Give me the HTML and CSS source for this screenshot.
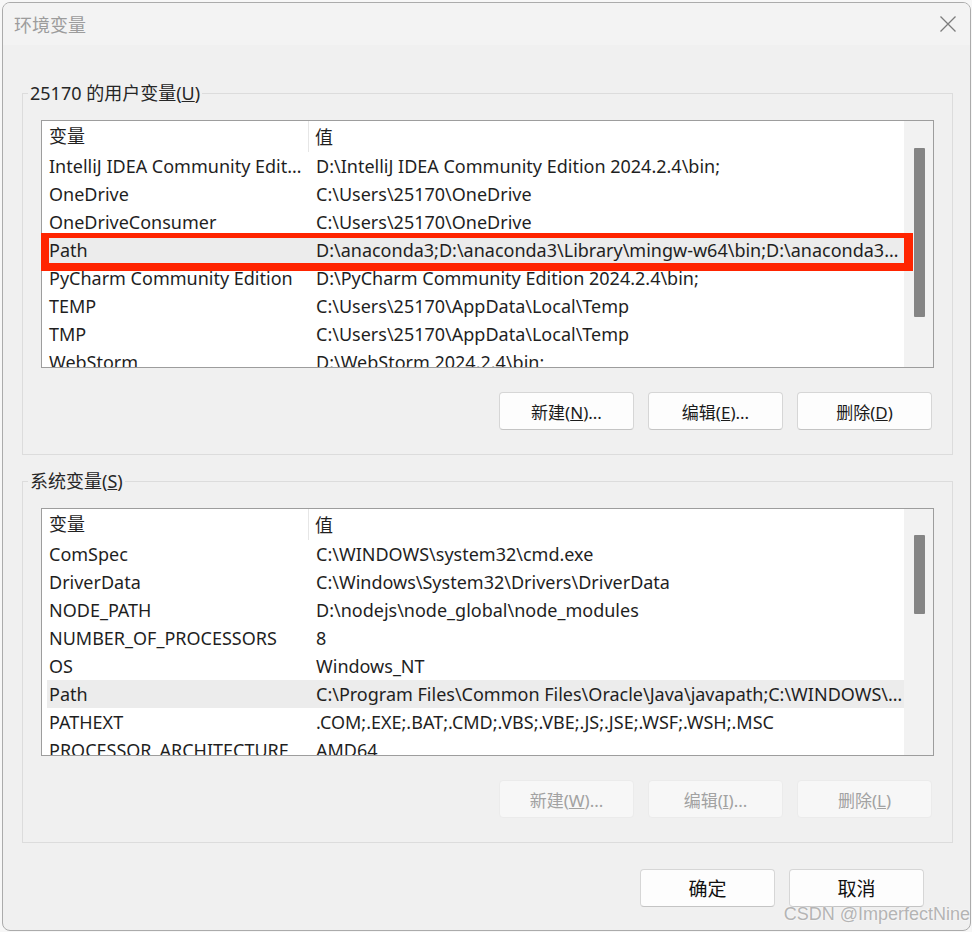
FILE: index.html
```html
<!DOCTYPE html>
<html lang="zh-CN">
  <head>
    <meta charset="UTF-8" />
    <meta name="viewport" content="width=device-width, initial-scale=1.0" />
    <title>环境变量</title>
    <link rel="stylesheet" href="styles.css">
  </head>
  <body>
    <div class="dialog">
      <div class="titlebar">
        <span class="title">环境变量</span>
        <button class="close" aria-label="关闭">
          <svg width="16" height="16" viewBox="0 0 16 16">
            <path d="M0.5 0.5 L15.5 15.5 M15.5 0.5 L0.5 15.5" stroke="#7c7c7c" stroke-width="1.3" fill="none" />
          </svg>
        </button>
      </div>

      <div class="content">
        <fieldset class="group">
          <legend>25170 的用户变量(<u>U</u>)</legend>
          <div class="list-wrap">
            <div class="listview">
              <div class="list-body">
                <div class="list-head">
                  <span class="cell name">变量</span>
                  <span class="cell value">值</span>
                </div>
                <div class="list-row">
                  <span class="cell name">IntelliJ IDEA Community Edition</span>
                  <span class="cell value">D:\IntelliJ IDEA Community Edition 2024.2.4\bin;</span>
                </div>
                <div class="list-row">
                  <span class="cell name">OneDrive</span>
                  <span class="cell value">C:\Users\25170\OneDrive</span>
                </div>
                <div class="list-row">
                  <span class="cell name">OneDriveConsumer</span>
                  <span class="cell value">C:\Users\25170\OneDrive</span>
                </div>
                <div class="list-row selected">
                  <span class="cell name">Path</span>
                  <span class="cell value">D:\anaconda3;D:\anaconda3\Library\mingw-w64\bin;D:\anaconda3\Library\usr\bin;D:\anaconda3\Library\bin;D:\anaconda3\Scripts;</span>
                </div>
                <div class="list-row">
                  <span class="cell name">PyCharm Community Edition</span>
                  <span class="cell value">D:\PyCharm Community Edition 2024.2.4\bin;</span>
                </div>
                <div class="list-row">
                  <span class="cell name">TEMP</span>
                  <span class="cell value">C:\Users\25170\AppData\Local\Temp</span>
                </div>
                <div class="list-row">
                  <span class="cell name">TMP</span>
                  <span class="cell value">C:\Users\25170\AppData\Local\Temp</span>
                </div>
                <div class="list-row">
                  <span class="cell name">WebStorm</span>
                  <span class="cell value">D:\WebStorm 2024.2.4\bin;</span>
                </div>
              </div>
              <div class="scrollbar">
                <div class="thumb thumb-user"></div>
              </div>
            </div>
            <div class="marker"></div>
          </div>
          <div class="actions">
            <button class="btn">新建(<u>N</u>)...</button>
            <button class="btn">编辑(<u>E</u>)...</button>
            <button class="btn">删除(<u>D</u>)</button>
          </div>
        </fieldset>

        <fieldset class="group">
          <legend>系统变量(<u>S</u>)</legend>
          <div class="list-wrap">
            <div class="listview">
              <div class="list-body">
                <div class="list-head">
                  <span class="cell name">变量</span>
                  <span class="cell value">值</span>
                </div>
                <div class="list-row">
                  <span class="cell name">ComSpec</span>
                  <span class="cell value">C:\WINDOWS\system32\cmd.exe</span>
                </div>
                <div class="list-row">
                  <span class="cell name">DriverData</span>
                  <span class="cell value">C:\Windows\System32\Drivers\DriverData</span>
                </div>
                <div class="list-row">
                  <span class="cell name">NODE_PATH</span>
                  <span class="cell value">D:\nodejs\node_global\node_modules</span>
                </div>
                <div class="list-row">
                  <span class="cell name">NUMBER_OF_PROCESSORS</span>
                  <span class="cell value">8</span>
                </div>
                <div class="list-row">
                  <span class="cell name">OS</span>
                  <span class="cell value">Windows_NT</span>
                </div>
                <div class="list-row selected">
                  <span class="cell name">Path</span>
                  <span class="cell value">C:\Program Files\Common Files\Oracle\Java\javapath;C:\WINDOWS\system32;C:\WINDOWS;C:\WINDOWS\System32\Wbem;</span>
                </div>
                <div class="list-row">
                  <span class="cell name">PATHEXT</span>
                  <span class="cell value">.COM;.EXE;.BAT;.CMD;.VBS;.VBE;.JS;.JSE;.WSF;.WSH;.MSC</span>
                </div>
                <div class="list-row">
                  <span class="cell name">PROCESSOR_ARCHITECTURE</span>
                  <span class="cell value">AMD64</span>
                </div>
              </div>
              <div class="scrollbar">
                <div class="thumb thumb-system"></div>
              </div>
            </div>
          </div>
          <div class="actions">
            <button class="btn" disabled>新建(<u>W</u>)...</button>
            <button class="btn" disabled>编辑(<u>I</u>)...</button>
            <button class="btn" disabled>删除(<u>L</u>)</button>
          </div>
        </fieldset>

        <div class="footer">
          <button class="btn">确定</button>
          <button class="btn">取消</button>
        </div>
      </div>

      <div class="watermark">CSDN @ImperfectNine</div>
    </div>
  </body>
</html>
```

FILE: styles.css
```css
body {
  margin: 0;
  background-color: #f7f7f7;
  font-family: 'Noto Sans', 'Noto Sans CJK SC', sans-serif;
  color: #1f1f1f;
}

.dialog {
  position: relative;
  box-sizing: border-box;
  width: 969px;
  height: 929px;
  margin: 2px 0 0 2px;
  background-color: #f0f0f0;
  border: 1px solid #ababab;
  border-radius: 8px;
  overflow: hidden;
}

.titlebar {
  display: flex;
  align-items: center;
  height: 42px;
  padding-left: 11px;
  background-color: #f3f3f3;
}

.title {
  font-size: 18px;
  color: #9c9c9c;
}

.close {
  margin-left: auto;
  margin-right: 14px;
  padding: 0;
  width: 16px;
  height: 16px;
  border: none;
  background: none;
  display: flex;
}

.content {
  padding: 36px 17px 0 19px;
}

.group {
  margin: 0;
  padding: 0 18px 24px 18px;
  border: 1px solid #dcdcdc;
}

.group + .group {
  margin-top: 14px;
}

.group legend {
  margin-left: -13px;
  padding: 0 2px;
  font-size: 18px;
  line-height: 24px;
  color: #262626;
}

.list-wrap {
  position: relative;
  margin-top: 15px;
}

.listview {
  display: flex;
  box-sizing: border-box;
  height: 248px;
  background-color: #fff;
  border: 1px solid #9d9d9d;
  overflow: hidden;
}

.list-body {
  flex: 1;
  min-width: 0;
  font-size: 18px;
}

.list-head,
.list-row {
  display: grid;
  align-items: center;
}

.list-head {
  grid-template-columns: 267px 1fr;
  height: 31px;
}

.list-head .name {
  padding-left: 7px;
  border-right: 1px solid #e6e6e6;
  height: 31px;
  line-height: 31px;
}

.list-head .value {
  padding-left: 6px;
}

.list-row {
  grid-template-columns: 262px 1fr;
  height: 28px;
  margin-left: 5px;
}

.list-row.selected {
  background-color: #ececec;
}

.cell {
  white-space: nowrap;
  overflow: hidden;
  text-overflow: ellipsis;
  line-height: 28px;
}

.list-row .name {
  padding-left: 2px;
  padding-right: 4px;
}

.list-row .value {
  padding-left: 7px;
}

.scrollbar {
  position: relative;
  width: 29px;
  background-color: #f2f2f2;
}

.thumb {
  position: absolute;
  left: 10px;
  width: 11px;
  background-color: #858585;
  border-radius: 1px;
}

.thumb-user {
  top: 27px;
  height: 169px;
}

.thumb-system {
  top: 26px;
  height: 79px;
}

/* red annotation drawn over the Path row */
.marker {
  position: absolute;
  left: 0;
  top: 113px;
  width: 872px;
  height: 38px;
  box-sizing: border-box;
  border-style: solid;
  border-color: #ff2400;
  border-width: 5px 9px 8px 8px;
}

.actions {
  display: flex;
  justify-content: flex-end;
  gap: 14px;
  margin-top: 24px;
  margin-right: 2px;
}

.btn {
  box-sizing: border-box;
  width: 135px;
  height: 38px;
  padding: 0;
  font-family: 'Noto Sans', 'Noto Sans CJK SC', sans-serif;
  font-size: 17px;
  color: #1b1b1b;
  background-color: #fdfdfd;
  border: 1px solid #d6d6d6;
  border-bottom-color: #c4c4c4;
  border-radius: 4px;
}

.btn:disabled {
  color: #a2a2a2;
  background-color: #f7f7f7;
  border-color: #ebebeb;
}

.footer {
  display: flex;
  justify-content: flex-end;
  gap: 14px;
  margin-top: 26px;
  padding-right: 29px;
}

.footer .btn {
  font-size: 19px;
  color: #111;
}

.watermark {
  position: absolute;
  right: 0;
  bottom: 6px;
  font-family: 'Liberation Sans', sans-serif;
  font-size: 18px;
  line-height: 20px;
  color: #b4b4b4;
  text-shadow: 0 0 2px #fff;
}
```
